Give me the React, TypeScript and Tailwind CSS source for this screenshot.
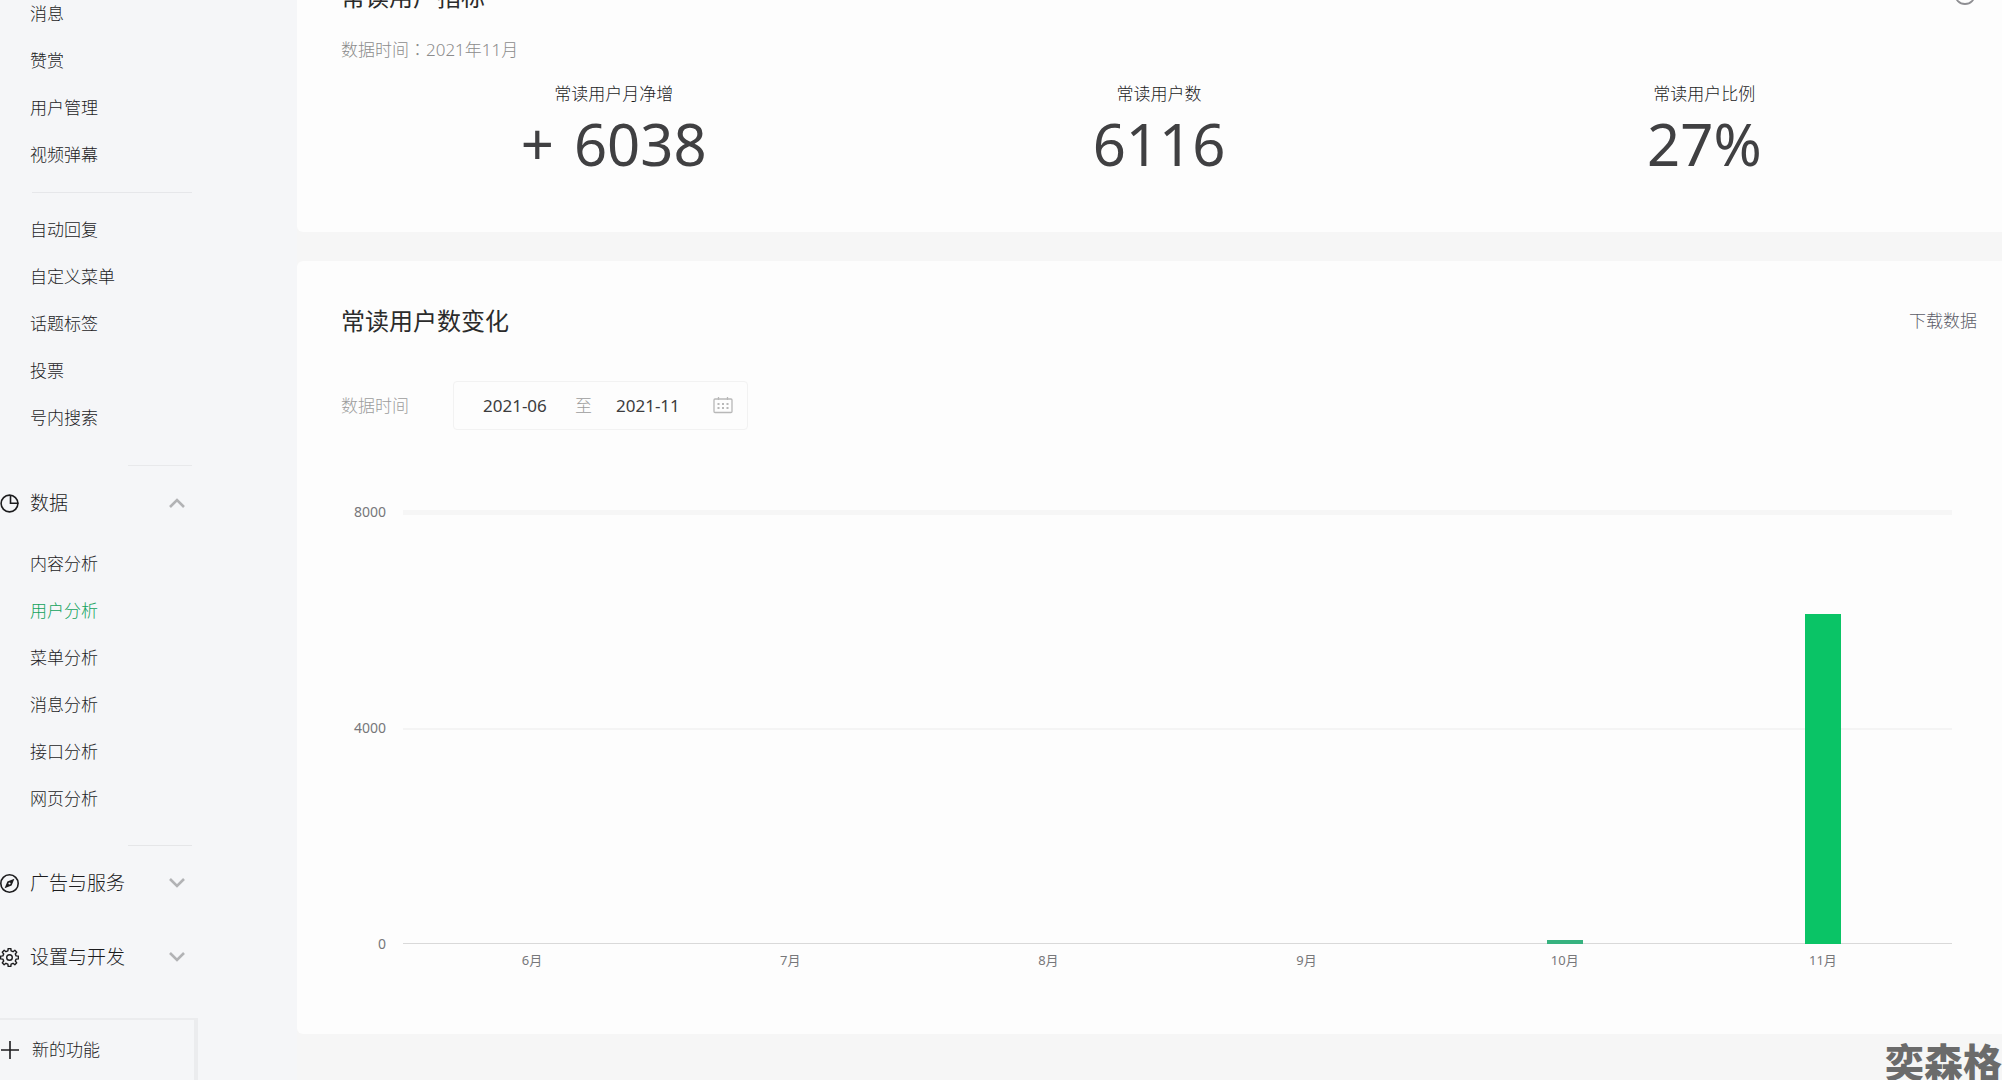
import type { ReactNode } from "react";
import { CircleHelp } from "lucide-react";

const manageLinks = ["消息", "赞赏", "用户管理", "视频弹幕"];
const toolLinks = ["自动回复", "自定义菜单", "话题标签", "投票", "号内搜索"];
const dataLinks = ["内容分析", "用户分析", "菜单分析", "消息分析", "接口分析", "网页分析"];

const metrics = [
  { label: "常读用户月净增", sign: "+", value: "6038" },
  { label: "常读用户数", value: "6116" },
  { label: "常读用户比例", value: "27%" },
];

const MAX = 8000;
const months = [
  { label: "6月", value: 0, color: "bg-[#0ac466]" },
  { label: "7月", value: 0, color: "bg-[#0ac466]" },
  { label: "8月", value: 0, color: "bg-[#0ac466]" },
  { label: "9月", value: 0, color: "bg-[#0ac466]" },
  { label: "10月", value: 78, color: "bg-[#36b27f]" },
  { label: "11月", value: 6116, color: "bg-[#0ac466]" },
];

function PieIcon() {
  return (
    <svg viewBox="0 0 19 19" className="size-[19px]" fill="none" stroke="currentColor" strokeWidth="1.6">
      <circle cx="9.5" cy="9.5" r="8.4" />
      <path d="M10.5 1v8.2h8" />
    </svg>
  );
}

function CompassIcon() {
  return (
    <svg viewBox="0 0 19 19" className="size-[19px]" fill="none" stroke="currentColor" strokeWidth="1.6">
      <circle cx="9.5" cy="9.5" r="8.7" />
      <path d="M14.4 4.8 11.6 11.6 7.4 7.4ZM4.6 14.2 7.4 7.4 11.6 11.6Z" fill="currentColor" stroke="none" />
      <circle cx="9.5" cy="9.5" r="1.1" fill="#f5f6f8" stroke="none" />
    </svg>
  );
}

// eight flat teeth around the hub
const gearPoints = Array.from({ length: 8 }, (_, i) => {
  const base = (i * Math.PI) / 4 - Math.PI / 2;
  return [
    [-0.24, 6.8],
    [-0.15, 9],
    [0.15, 9],
    [0.24, 6.8],
  ]
    .map(([a, r]) => `${9.5 + r * Math.cos(base + a)},${9.5 + r * Math.sin(base + a)}`)
    .join(" ");
}).join(" ");

function GearIcon() {
  return (
    <svg viewBox="0 0 19 19" className="size-[19px]" fill="none" stroke="currentColor" strokeWidth="1.4" strokeLinejoin="round">
      <polygon points={gearPoints} />
      <circle cx="9.5" cy="9.5" r="2.8" />
    </svg>
  );
}

function Chevron({ up = false }: { up?: boolean }) {
  return (
    <svg viewBox="0 0 16 10" className="h-2.5 w-4 text-[#b2b3b5]" fill="none" stroke="currentColor" strokeWidth="2.6">
      <path d={up ? "M1 9 8 2l7 7" : "M1 1l7 7 7-7"} />
    </svg>
  );
}

function CalendarIcon() {
  return (
    <svg viewBox="0 0 20 17" className="h-[17px] w-5" fill="none" stroke="currentColor" strokeWidth="1.3">
      <rect x="1" y="2" width="18" height="13.5" rx="1" />
      <path d="M5.5 0v3M14.5 0v3" />
      <path d="M4.5 7h2M9 7h2M13.5 7h2M4.5 11h2M9 11h2M13.5 11h2" strokeWidth="2" />
    </svg>
  );
}

function NavList({ items, active }: { items: string[]; active?: string }) {
  return (
    <ul className="pl-[30px] text-[17px] leading-[47px]">
      {items.map((item) => (
        <li key={item}>
          <a href="#" className={item === active ? "text-[#12a35c]" : "text-[#1c1c1e]"}>
            {item}
          </a>
        </li>
      ))}
    </ul>
  );
}

function NavGroup({ icon, label, open = false }: { icon: ReactNode; label: string; open?: boolean }) {
  return (
    <button type="button" aria-expanded={open} className="flex h-[74px] w-[185px] items-center text-[19px] text-[#1c1c1e]">
      {icon}
      <span className="ml-[11px] flex-1 text-left">{label}</span>
      <Chevron up={open} />
    </button>
  );
}

function Sidebar() {
  return (
    <aside className="flex w-[297px] shrink-0 flex-col bg-[#f5f6f8]">
      <nav className="-mt-2.5">
        <NavList items={manageLinks} />
        <hr className="mt-3.5 mb-[13px] ml-8 w-40 border-[#e6e7ea]" />
        <NavList items={toolLinks} />
        <hr className="mt-6 ml-32 w-16 border-[#e8e9eb]" />
        <NavGroup icon={<PieIcon />} label="数据" open />
        <NavList items={dataLinks} active="用户分析" />
        <hr className="mt-[23px] ml-32 w-16 border-[#e5e6e8]" />
        <NavGroup icon={<CompassIcon />} label="广告与服务" />
        <NavGroup icon={<GearIcon />} label="设置与开发" />
      </nav>
      <button
        type="button"
        className="mt-6 flex h-[70px] w-[198px] items-start border-t-2 border-r-4 border-[#ebecee] pt-[18px] text-[17px] leading-6 text-[#1c1c1e]"
      >
        <svg viewBox="0 0 20 20" className="mt-0.5 size-5" stroke="currentColor" strokeWidth="1.6">
          <path d="M1 10h18M10 1v18" />
        </svg>
        <span className="ml-3">新的功能</span>
      </button>
    </aside>
  );
}

function MetricsCard() {
  return (
    <section className="rounded-l-md bg-[#fdfdfd] pt-[19px] pr-[25px] pb-14 pl-11">
      <div className="flex h-9 items-center justify-between">
        <h2 className="text-2xl font-normal text-[#2b2b2b]">常读用户指标</h2>
        <button type="button" aria-label="指标说明" className="mb-1.5 text-[#8e8e92]">
          <CircleHelp size={24} strokeWidth={1.8} />
        </button>
      </div>
      <p className="mt-[22px] text-[17px] leading-6 text-[#8c8c8c]">
        数据时间<span className="font-['Noto_Sans_CJK_TC',sans-serif]">：</span>2021年11月
      </p>
      <dl className="mt-5 grid grid-cols-3 text-center">
        {metrics.map((m) => (
          <div key={m.label}>
            <dt className="text-[17px] leading-6 text-[#1c1c1e]">{m.label}</dt>
            <dd className="mt-1.5 text-[58px] leading-[64px] font-normal text-[#404042]">
              {m.sign && <span className="mr-5">{m.sign}</span>}
              {m.value}
            </dd>
          </div>
        ))}
      </dl>
    </section>
  );
}

function DateRange() {
  return (
    <div className="mt-[42px] flex items-center text-[17px]">
      <label htmlFor="from" className="w-28 text-[#9c9c9c]">
        数据时间
      </label>
      <div className="flex h-[49px] w-[295px] items-center rounded-sm border border-[#f2f2f2] pl-[29px] text-[#3c3c3e]">
        <input id="from" type="text" defaultValue="2021-06" className="w-[72px] font-normal outline-none" />
        <span className="ml-5 text-[#9c9c9c]">至</span>
        <input type="text" aria-label="结束月份" defaultValue="2021-11" className="ml-6 w-[72px] font-normal outline-none" />
        <button type="button" aria-label="选择日期" className="ml-[25px] text-[#b8b8b8]">
          <CalendarIcon />
        </button>
      </div>
    </div>
  );
}

function BarChart() {
  return (
    <div className="mt-[82px] mr-[25px] flex text-sm text-[#77777a]">
      <div className="flex h-[432px] w-[45px] flex-col justify-between text-right font-normal">
        <span className="-mt-2.5 leading-5">8000</span>
        <span className="leading-5">4000</span>
        <span className="-mb-2.5 leading-5">0</span>
      </div>
      <div className="ml-[17px] flex-1">
        <div className="grid h-[432px]">
          <div className="col-start-1 row-start-1 flex flex-col justify-between">
            <div className="-mt-0.5 h-[5px] bg-[#f6f6f6]" />
            <div className="h-0.5 bg-[#f4f4f4]" />
            <div className="h-px bg-[#d9d9d9]" />
          </div>
          <div className="col-start-1 row-start-1 grid grid-cols-6 items-end justify-items-center">
            {months.map((m) => (
              <div key={m.label} className={`w-9 ${m.color}`} style={{ height: `${(m.value / MAX) * 100}%` }} />
            ))}
          </div>
        </div>
        <div className="mt-1.5 grid grid-cols-6 text-center text-[13px] leading-5 font-normal">
          {months.map((m) => (
            <span key={m.label}>{m.label}</span>
          ))}
        </div>
      </div>
    </div>
  );
}

function TrendCard() {
  return (
    <section className="mt-[29px] rounded-l-md bg-[#fdfdfd] pt-[42px] pr-[25px] pb-16 pl-11">
      <div className="flex h-9 items-center justify-between">
        <h2 className="text-2xl font-normal text-[#2b2b2b]">常读用户数变化</h2>
        <a href="#" className="text-[17px] text-[#5c5c68]">
          下载数据
        </a>
      </div>
      <DateRange />
      <BarChart />
    </section>
  );
}

export default function App() {
  return (
    <div className="relative flex h-screen overflow-hidden bg-[#f6f6f6] font-['Noto_Sans','Noto_Sans_CJK_SC',sans-serif] font-light">
      <Sidebar />
      <main className="-mt-10 min-w-0 flex-1">
        <MetricsCard />
        <TrendCard />
      </main>
      <div className="absolute right-0 bottom-0 text-[39px] leading-9 font-black text-[#6b6b6b]">奕森格</div>
    </div>
  );
}
